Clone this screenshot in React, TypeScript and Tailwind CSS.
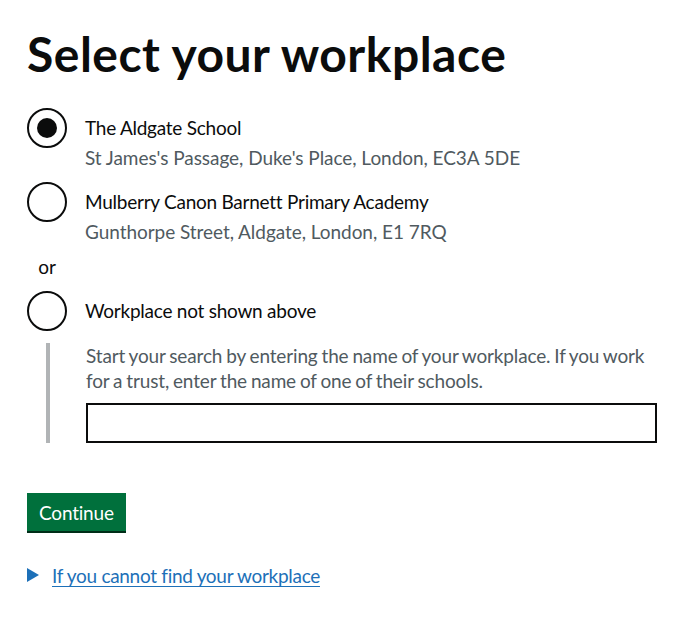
import React from "react"

function Radio({ checked }: { checked?: boolean }) {
  return (
    <div className="w-[40px] h-[40px] shrink-0 rounded-full border-2 border-[#0b0c0c] flex items-center justify-center">
      {checked && <div className="w-[20px] h-[20px] rounded-full bg-[#0b0c0c]" />}
    </div>
  )
}

function Option({ label, hint, checked }: { label: string; hint?: string; checked?: boolean }) {
  return (
    <div className="flex items-start mb-[10px]">
      <Radio checked={checked} />
      <div className={"ml-[18px] pt-[7px] " + (hint ? "pb-[2px]" : "")}>
        <div className="text-[19px] leading-[25px] tracking-[-0.25px]">{label}</div>
        {hint && <div className="mt-[5px] text-[19px] leading-[25px] text-[#505a5f] tracking-[-0.05px]">{hint}</div>}
      </div>
    </div>
  )
}

export default function App() {
  return (
    <div className="min-h-screen bg-white pl-[27px] pr-[33px] pt-[29px] text-[#0b0c0c] font-['Lato','Liberation_Sans',sans-serif]">
      <h1 className="text-[48px] leading-[50px] font-bold mb-[29px] tracking-[0.5px]">Select your workplace</h1>

      <Option checked label="The Aldgate School" hint="St James's Passage, Duke's Place, London, EC3A 5DE" />
      <Option label="Mulberry Canon Barnett Primary Academy" hint="Gunthorpe Street, Aldgate, London, E1 7RQ" />
      <div className="w-[40px] text-center text-[19px] leading-[25px] mb-[10px] -mt-[2px] pb-[2px]">or</div>
      <div className="flex items-start">
        <Radio />
        <div className="ml-[18px] pt-[7px] text-[19px] leading-[25px] tracking-[-0.25px]">Workplace not shown above</div>
      </div>

      <div className="mt-[12px] ml-[19px] border-l-4 border-[#b1b4b6] pl-[36px]">
        <p className="text-[19px] leading-[25px] text-[#505a5f] mb-[10px] whitespace-nowrap tracking-[-0.15px] [word-spacing:-0.8px]">
          Start your search by entering the name of your workplace. If you work
          <br />
          for a trust, enter the name of one of their schools.
        </p>
        <input type="text" className="block w-full h-[40px] border-2 border-[#0b0c0c] px-[5px] text-[19px] outline-none" />
      </div>

      <button className="mt-[50px] bg-[#00703c] text-white text-[19px] leading-[19px] px-[12px] pt-[10px] pb-[9px] shadow-[0_2px_0_#002d18] tracking-[-0.2px]">
        Continue
      </button>

      <div className="mt-[32px] relative pl-[25px]">
        <span className="absolute left-0 top-[5px] w-0 h-0 border-y-[7px] border-y-transparent border-l-[12px] border-l-[#1d70b8]" />
        <a href="#" className="text-[19px] leading-[25px] text-[#1d70b8] underline decoration-1 underline-offset-[3px] tracking-[-0.3px]">
          If you cannot find your workplace
        </a>
      </div>
    </div>
  )
}
